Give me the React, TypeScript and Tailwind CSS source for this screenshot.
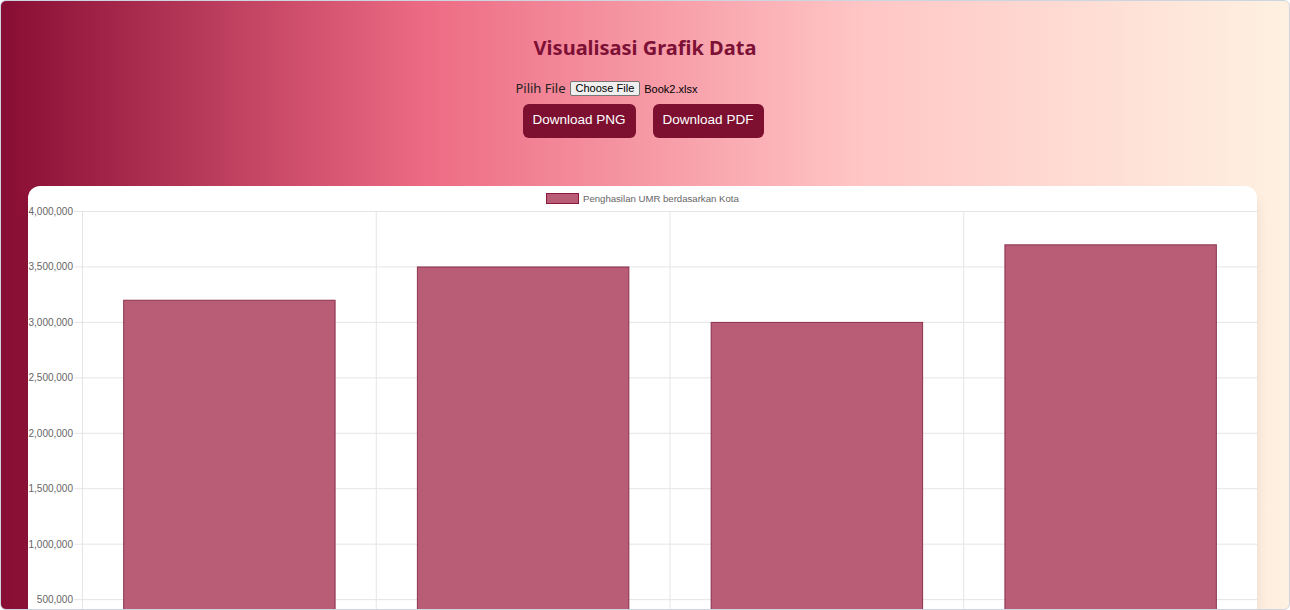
import React from 'react';

const data = [
  { city: 'A', value: 3200000 },
  { city: 'B', value: 3500000 },
  { city: 'C', value: 3000000 },
  { city: 'D', value: 3700000 },
];

const ticks = [4000000, 3500000, 3000000, 2500000, 2000000, 1500000, 1000000, 500000, 0];

// chart geometry, in card pixels
const W = 1229;
const H = 520;
const LEFT = 54;
const TOP = 25;
const STEP = 55.45; // px per 500,000
const yOf = (v: number) => TOP + ((4000000 - v) / 500000) * STEP;
const catW = (W - LEFT) / data.length;
const barW = catW * 0.72;

const BarChart: React.FC = () => (
  <svg width={W} height={H} className="block" style={{ fontFamily: '"Liberation Sans", Arial, sans-serif' }}>
    {/* legend */}
    <rect x={518.5} y={7.5} width={32} height={10} fill="#b95d76" stroke="#8b1a3e" strokeWidth={1} />
    <text x={555} y={16} fontSize={9.6} fill="#666">Penghasilan UMR berdasarkan Kota</text>

    {/* horizontal grid + ticks */}
    {ticks.map((t) => (
      <g key={t}>
        <line x1={LEFT - 8} x2={W} y1={yOf(t) + 0.5} y2={yOf(t) + 0.5} stroke="#e5e5e5" />
        <text x={45} y={yOf(t) + 4} fontSize={10} fill="#666" textAnchor="end">
          {t.toLocaleString('en-US')}
        </text>
      </g>
    ))}

    {/* vertical grid */}
    {[0, 1, 2, 3, 4].map((i) => (
      <line key={i} x1={LEFT + i * catW + 0.5} x2={LEFT + i * catW + 0.5} y1={TOP} y2={H} stroke="#e5e5e5" />
    ))}

    {/* bars */}
    {data.map((d, i) => {
      const x = LEFT + i * catW + (catW - barW) / 2;
      const y = yOf(d.value);
      return (
        <rect
          key={d.city}
          x={x + 0.5}
          y={y + 0.5}
          width={barW}
          height={yOf(0) - y}
          fill="#b95d76"
          stroke="#7a1a3a"
          strokeOpacity={0.8}
          strokeWidth={1}
        />
      );
    })}
  </svg>
);

const App: React.FC = () => {
  return (
    <div className="h-[610px] w-full overflow-hidden rounded-md border border-[#cdd6e0] bg-[linear-gradient(to_right,#880d34_0%,#ed6b84_33%,#ffc6c6_67%,#fef1e1_100%)]">
      <div className="flex flex-col items-center pt-[33px]">
        <h2
          className="text-[20px] leading-[28px] font-bold text-[#7d1035]"
          style={{ fontFamily: '"Noto Sans", sans-serif' }}
        >
          Visualisasi Grafik Data
        </h2>

        <div className="mt-[17px] flex items-center text-[13px] text-[#222]">
          <span className="mr-[4px]" style={{ fontFamily: '"Noto Sans", sans-serif' }}>Pilih File</span>
          <div className="flex w-[205px] items-center" style={{ fontFamily: '"Liberation Sans", Arial, sans-serif' }}>
            <span className="rounded-[2px] border border-[#767676] bg-[#efefef] px-[5px] text-[11px] leading-[13px] text-black">
              Choose File
            </span>
            <span className="ml-[4px] text-[11px] text-black">Book2.xlsx</span>
          </div>
        </div>

        <div className="mt-[5px] flex gap-[17px] pr-[4px]" style={{ fontFamily: '"Liberation Sans", Arial, sans-serif' }}>
          <button className="h-[34px] w-[113px] rounded-md bg-[#7d0f30] text-[13.5px] text-white">Download PNG</button>
          <button className="h-[34px] w-[111px] rounded-md bg-[#7d0f30] text-[13.5px] text-white">Download PDF</button>
        </div>
      </div>

      <div className="ml-[27px] mt-[48px] w-[1229px] overflow-hidden rounded-xl bg-white shadow-lg">
        <BarChart />
      </div>
    </div>
  );
};

export default App;
